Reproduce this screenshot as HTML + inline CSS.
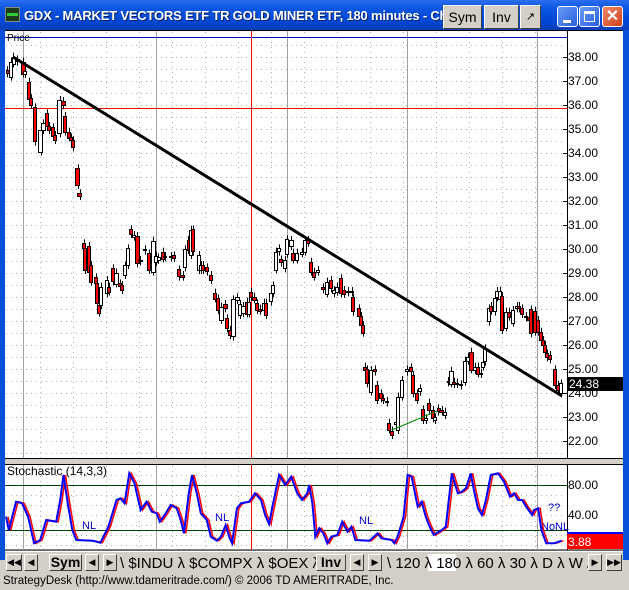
<!DOCTYPE html>
<html><head><meta charset="utf-8"><style>
*{margin:0;padding:0;box-sizing:border-box}
body{width:629px;height:589px;overflow:hidden;background:#d4d0c8;font-family:"Liberation Sans",sans-serif;position:relative}
.abs{position:absolute}
#title{left:0;top:0;width:629px;height:30px;background:linear-gradient(#2a6df0,#0a55e0 30%,#0046d5 70%,#0a3fb8);}
#title .t{left:24px;top:8px;color:#fff;font-weight:bold;font-size:13px;white-space:nowrap;letter-spacing:-0.2px;text-shadow:1px 1px #0a246a;width:419px;overflow:hidden}
.gb{background:#d4d0c8;border:1px solid #fff;border-right-color:#404040;border-bottom-color:#404040;font-size:14px;text-align:center;line-height:22px}
.xp{width:21px;height:21px;border:1px solid #fff;border-radius:3px;background:linear-gradient(135deg,#6a9cf8,#2a5fe0)}
#frameL{left:0;top:30px;width:5px;height:530px;background:#0a4fd8}
#frameR{left:623px;top:30px;width:6px;height:530px;background:#0a4fd8}
.tab{font-size:15px;top:555px}
</style></head><body>
<div id="title" class="abs">
 <div class="abs" style="left:5px;top:7px;width:15px;height:15px;background:#1a3a1a;border:1px solid #888"><div style="margin:5px 1px;height:3px;background:#3c3"></div></div>
 <div class="abs t">GDX - MARKET VECTORS ETF TR GOLD MINER ETF, 180 minutes - Cha</div>
 <div class="abs gb" style="left:443px;top:5px;width:39px;height:24px">Sym</div>
 <div class="abs gb" style="left:484px;top:5px;width:35px;height:24px">Inv</div>
 <div class="abs gb" style="left:520px;top:5px;width:21px;height:24px;font-size:11px">&#x2197;</div>
 <div class="abs xp" style="left:557px;top:6px"><div class="abs" style="left:5px;top:13px;width:8px;height:3px;background:#fff"></div></div>
 <div class="abs xp" style="left:579px;top:6px"><div class="abs" style="left:4px;top:4px;width:11px;height:11px;border:1px solid #fff;border-top-width:3px"></div></div>
 <div class="abs xp" style="left:602px;top:6px;background:linear-gradient(135deg,#f08a6a,#d0401a);color:#fff;font-weight:bold;font-size:16px;text-align:center;line-height:19px">✕</div>
</div>
<div id="frameL" class="abs"></div><div id="frameR" class="abs"></div>
<svg class="abs" style="left:0;top:0" width="629" height="589" id="main"></svg>
<div class="abs" style="left:5px;top:551px;width:618px;height:22px;background:#d4d0c8;border-top:1px solid #fff"></div>
<div class="abs gb" style="left:6px;top:554px;width:16px;height:17px;font-size:9px;line-height:15px">◀◀</div>
<div class="abs gb" style="left:24px;top:554px;width:14px;height:17px;font-size:9px;line-height:15px">◀</div>
<div class="abs gb" style="left:49px;top:554px;width:33px;height:17px;font-weight:bold;line-height:15px">Sym</div>
<div class="abs gb" style="left:85px;top:554px;width:14px;height:17px;font-size:9px;line-height:15px">◀</div>
<div class="abs gb" style="left:103px;top:554px;width:14px;height:17px;font-size:9px;line-height:15px">▶</div>
<div class="abs tab" style="left:120px;white-space:nowrap;width:196px;overflow:hidden">\ $INDU λ $COMPX λ $OEX λ IWM</div>
<div class="abs gb" style="left:316px;top:554px;width:30px;height:17px;font-weight:bold;line-height:15px">Inv</div>
<div class="abs gb" style="left:350px;top:554px;width:14px;height:17px;font-size:9px;line-height:15px">◀</div>
<div class="abs gb" style="left:368px;top:554px;width:14px;height:17px;font-size:9px;line-height:15px">▶</div>
<div class="abs" style="left:428px;top:554px;width:28px;height:17px;background:#fff"></div>
<div class="abs tab" style="left:387px;white-space:nowrap">\ 120 λ 180 λ 60 λ 30 λ D λ W /</div>
<div class="abs gb" style="left:588px;top:554px;width:14px;height:17px;font-size:9px;line-height:15px">▶</div>
<div class="abs gb" style="left:606px;top:554px;width:16px;height:17px;font-size:9px;line-height:15px">▶▶</div>
<div class="abs" style="left:0;top:573px;width:629px;height:16px;background:#d4d0c8;font-size:11.5px;padding-left:3px;line-height:17px;white-space:nowrap">StrategyDesk (http://www.tdameritrade.com/) © 2006 TD AMERITRADE, Inc.</div>
<script>
var s='';
function R(x,y,w,h,f,st){s+='<rect x="'+x+'" y="'+y+'" width="'+w+'" height="'+h+'" fill="'+f+'"'+(st?' stroke="'+st+'" stroke-width="1"':'')+'/>';}
function L(x1,y1,x2,y2,c,w,d){s+='<line x1="'+x1+'" y1="'+y1+'" x2="'+x2+'" y2="'+y2+'" stroke="'+c+'" stroke-width="'+(w||1)+'"'+(d?' stroke-dasharray="'+d+'"':'')+'/>';}
function T(x,y,t,c,sz){s+='<text x="'+x+'" y="'+y+'" fill="'+c+'" font-size="'+(sz||12)+'" font-family="Liberation Sans,sans-serif">'+t+'</text>';}
R(5,31,562,427,'#fff');R(567,31,56,427,'#fff');
R(5,465,562,85,'#fff');R(567,465,56,85,'#fff');
L(5,30.5,623,30.5,'#000');L(5,458.5,623,458.5,'#000');L(5,464.5,623,464.5,'#000');L(5,550,623,550,'#000');
for(var y=45;y<458;y+=12)L(6,y+.5,566,y+.5,'#b0b0b0',1,'1,4');
for(var x=40;x<566;x+=33)L(x+.5,32,x+.5,458,'#b0b0b0',1,'1,4');
for(var y=475;y<550;y+=10)L(6,y+.5,566,y+.5,'#b0b0b0',1,'1,4');
for(var x=40;x<566;x+=33)L(x+.5,466,x+.5,550,'#b0b0b0',1,'1,4');
[23,156,287,407,537].forEach(function(x){L(x+.5,31,x+.5,458,'#a0a0a0');L(x+.5,465,x+.5,550,'#a0a0a0');});
L(251.5,31,251.5,458,'#f00');L(251.5,465,251.5,550,'#f00');
L(567.5,31,567.5,458,'#000');L(567.5,465,567.5,550,'#000');
L(5,37.5,567,37.5,'#0000c0');
L(5,108.5,567,108.5,'#f00');
T(7,41,'Price','#000',10);
for(var p=38;p>=22;p--){var yy=57+(38-p)*24;T(568,yy+4,p+'.00','#000',12);L(563,yy+.5,567,yy+.5,'#000');}
var c3=[[18,26,120,130,1],[28,40,95,140,0],[35,45,80,100,0],[48,56,88,95,0],[62,76,95,130,1],[70,82,122,132,0],[82,94,155,205,1],[88,100,205,225,1],[100,112,232,335,1],[115,130,300,365,0],[122,136,280,300,0],[136,148,250,290,1],[142,154,288,300,1],[154,166,292,320,1],[160,172,315,330,1],[172,186,210,310,0],[182,196,213,226,1],[190,202,258,305,1],[200,212,305,322,1],[208,220,322,330,1],[214,226,330,352,1],[226,240,415,465,1],[232,246,490,498,1],
[245,258,640,655,1],[250,262,655,720,1],[262,274,648,725,1],[268,280,705,755,1],[282,292,742,760,1],[286,298,760,820,1],[292,304,825,848,1],[298,310,770,825,0],[316,328,750,790,0],[322,334,770,785,1],[334,346,715,755,1],[342,356,728,760,0],[354,366,760,768,1],[360,372,765,780,1],[370,382,706,735,0],[378,390,655,705,0],[388,400,598,612,1],[396,408,615,620,0],[404,418,618,700,1],[414,428,690,694,0],[428,440,658,662,0],[440,452,670,720,1],[452,466,632,725,0],[462,472,677,695,0],[470,480,682,690,0],[484,496,665,685,1],[490,500,678,682,0],[508,520,678,682,0],[516,528,676,684,1],[532,542,718,740,1],[540,556,735,740,1],[550,562,658,712,0],[560,570,630,660,1],[568,580,600,675,0],[574,586,598,665,1],[592,604,675,720,0],[598,610,705,720,0],[604,616,705,720,1],[616,628,712,725,1],[628,640,735,750,1],[640,652,788,805,1],[648,660,805,840,1],[656,670,830,870,0],[668,682,822,835,1],[676,688,865,895,1],[684,696,900,915,1],[692,706,808,920,0],[704,718,802,810,0],[714,726,822,855,0],[722,736,828,850,0],[734,748,815,850,1],[742,754,815,850,0],[748,760,785,800,1],[756,770,800,808,1],[766,778,820,840,1],[774,784,836,842,1],[786,798,818,838,0],[792,804,818,855,1],[808,820,790,815,0],[814,826,766,790,0],[822,834,665,718,0],[832,844,655,665,0],[838,850,688,698,1],[848,860,690,715,0],[856,868,628,672,0],[866,880,630,648,0],[874,886,668,688,1],[886,898,668,688,0]];
var c4=[[0,12,95,100,0],[10,22,60,95,0],[18,30,60,68,1],[28,40,125,155,1],[36,48,155,170,1],[48,60,150,155,0],[64,76,202,208,1],[74,86,185,220,0],[86,98,180,205,1],[96,108,210,220,0],[104,116,200,215,0],[116,128,175,220,1],[126,138,210,222,1],[138,150,213,217,0],[150,160,213,217,0],[152,164,232,275,1],[170,182,265,290,1],[178,190,288,315,1],[184,196,315,338,1],[190,202,440,448,1],[196,208,448,490,1],[206,218,450,515,0],[218,230,448,455,1],[226,238,495,540,1],[236,248,520,535,1],[244,256,535,540,1],[256,268,543,547,0],[262,274,608,628,1],[270,282,632,645,1],[282,294,605,610,0],[288,300,530,630,0],[300,312,480,530,0],[316,328,448,455,0],[326,338,442,455,1],[334,346,465,520,1],[344,356,520,540,1],[354,366,505,515,0],[364,376,568,600,1],[372,384,595,600,0],[382,394,548,570,1],[392,404,570,595,1],[400,410,592,600,0],[410,420,565,575,1],[418,432,570,575,1],[428,440,575,585,0],[440,450,483,487,0],[446,460,452,490,0],[456,468,485,492,1],[466,478,488,492,0],[476,488,493,497,0],[488,500,422,485,0],[498,510,410,422,0],[506,520,395,448,1],[518,530,440,450,0],[528,540,440,460,1],[536,548,458,462,1],[544,556,425,440,0],[550,562,385,425,0],[562,574,265,305,0],[566,578,258,272,1],[578,590,235,275,0],[586,598,213,232,0],[594,606,212,235,0],[600,612,228,330,1],[612,624,275,322,0],[620,632,275,290,1],[632,644,270,308,0],[644,656,258,265,0],[652,664,258,265,1],[660,672,265,282,1],[672,684,288,292,0],[680,692,290,298,1],[688,700,268,340,1],[698,710,272,335,1],[708,720,300,335,1],[716,728,335,360,1],[724,736,360,375,1],[730,742,375,395,1],[736,748,400,412,1],[744,756,405,418,1],[760,772,448,495,1],[768,780,495,510,1],[778,790,490,520,0]];
function cand(a,ox,oy){a.forEach(function(c){var x1=ox+c[0]/3,x2=ox+c[1]/3,y1=oy+c[2]/3,y2=oy+c[3]/3;var xm=Math.round((x1+x2)/2)+.5;L(xm,y1-4,xm,y2+4,'#000');var w=Math.max(3,Math.round(x2-x1)-1);R(Math.round(x1)+.5,Math.round(y1)+.5,w,Math.max(1,Math.round(y2-y1)),c[4]?'#f00':'#fff','#000');});}
cand(c3,0,30);cand(c4,300,220);
L(13,57,562,396,'#000',3);
L(392,430,437,411,'#080',1);
R(567,377,56,14,'#000');T(569,388,'24.38','#fff',12);
L(5,485.5,567,485.5,'#004000');L(5,530.5,567,530.5,'#004000');
T(7,475,'Stochastic (14,3,3)','#000',12);
T(568,489,'80.00','#000',12);T(568,519,'40.00','#000',12);
R(567,533,56,16,'#f00');L(567,533,623,533,'#00f',2);T(568,546,'3.88','#fff',12);
T(82,529,'NL','#00c',11);T(215,521,'NL','#00c',11);T(359,524,'NL','#00c',11);T(548,511,'??','#00c',11);T(541,530,'NoNL','#00c',11);
var P=[15,200,22,240,40,155,55,160,70,200,85,280,100,270,115,210,140,215,150,150,158,75,170,170,180,240,190,270,230,272,250,278,270,230,290,150,300,145,310,160,322,70,335,100,350,180,365,155,378,185,390,190,398,215,410,195,425,165,440,175,450,210,458,250,470,130,478,75,490,130,500,190,515,210,525,260,540,272,550,260,562,225,572,265,578,280,590,175,600,160,620,155,635,130,650,150,660,195,670,222,680,160,695,75,710,105,725,80,740,130,752,150,765,130,770,105,778,160,785,260,795,235,805,250,815,280,825,260,840,255,852,215,865,245,875,230,885,270,920,272,940,250,950,265,975,270,982,280,990,260,1005,200,1015,75,1025,80,1040,170,1050,155,1060,200,1070,230,1080,255,1100,240,1110,230,1125,70,1140,130,1150,125,1160,115,1172,70,1180,120,1190,175,1200,195,1210,150,1222,75,1240,70,1255,95,1270,140,1280,130,1290,150,1300,150,1310,170,1325,195,1330,180,1340,175,1348,240,1360,280,1370,280,1380,280,1398,272];
function poly(dx,c,w){var pts=[];for(var i=0;i<P.length;i+=2)pts.push((P[i]/2.49+dx).toFixed(1)+','+(450+P[i+1]/3).toFixed(1));s+='<polyline points="'+pts.join(' ')+'" fill="none" stroke="'+c+'" stroke-width="'+w+'"/>';}
poly(2,'#f00',1.5);poly(0,'#00f',2);
document.getElementById('main').innerHTML=s;
</script>
</body></html>
